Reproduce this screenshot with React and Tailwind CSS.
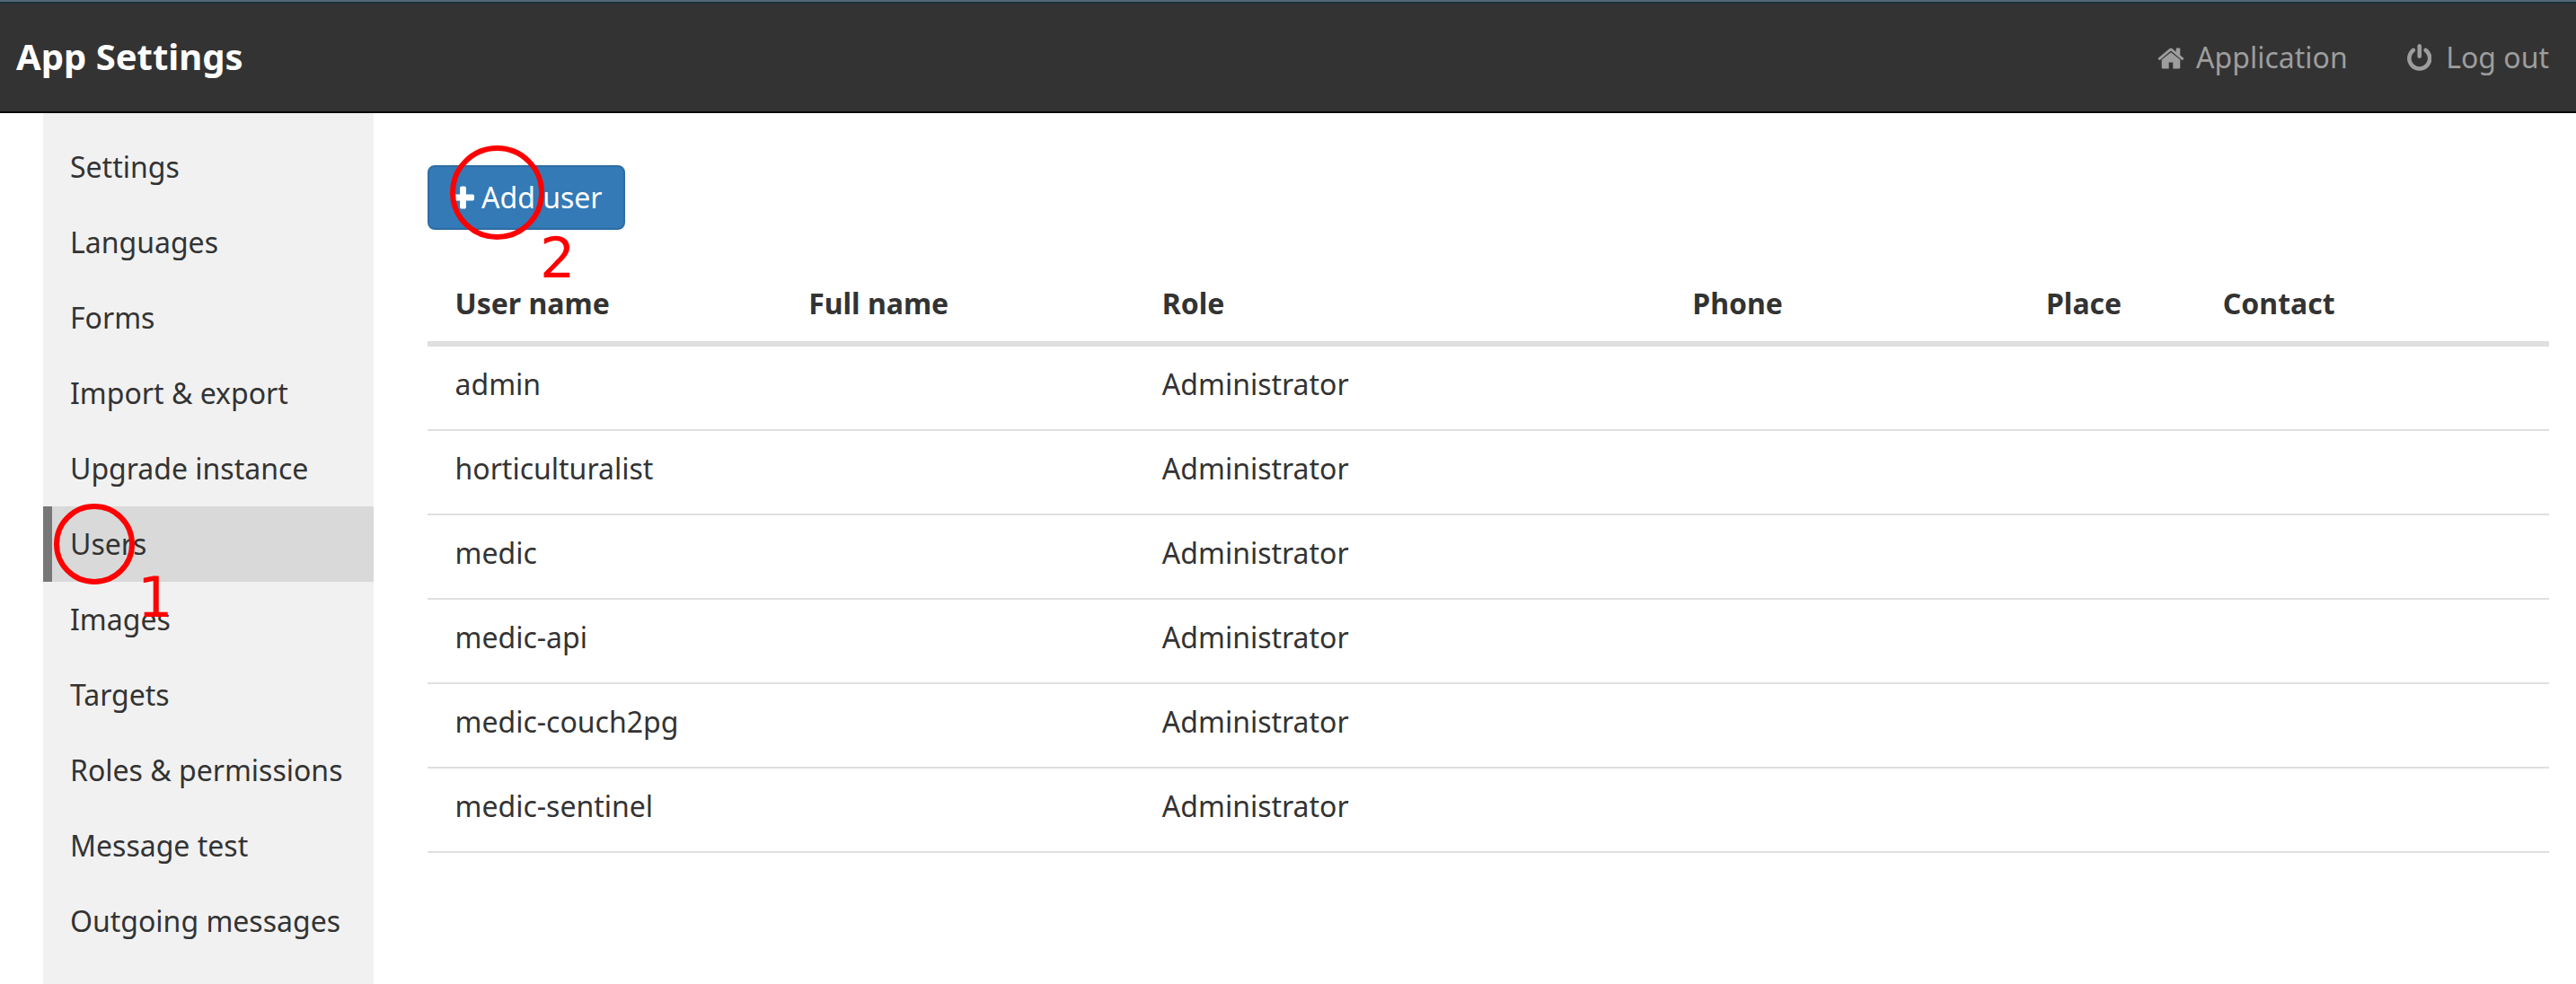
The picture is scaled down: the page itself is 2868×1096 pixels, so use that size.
const NAV = [
  'Settings', 'Languages', 'Forms', 'Import & export', 'Upgrade instance', 'Users',
  'Images', 'Targets', 'Roles & permissions', 'Message test', 'Outgoing messages',
];
const USERS = ['admin', 'horticulturalist', 'medic', 'medic-api', 'medic-couch2pg', 'medic-sentinel'];

const HomeIcon = () => (
  <svg className="mt-px h-[32px] w-[30px] shrink-0" viewBox="0 0 1664 1792" fill="currentColor">
    <path d="M1408 992v480q0 26-19 45t-45 19h-384v-384h-256v384h-384q-26 0-45-19t-19-45v-480q0-1 .5-3t.5-3l575-474 575 474q1 2 1 6zm223-69l-62 74q-8 9-21 11h-3q-13 0-21-7l-692-577-692 577q-12 8-24 7-13-2-21-11l-62-74q-8-10-7-23.500t11-21.500l719-599q32-26 76-26t76 26l244 204v-195q0-14 9-23t23-9h192q14 0 23 9t9 23v408l219 182q10 8 11 21.500t-7 23.500z" />
  </svg>
);

const PowerIcon = () => (
  <svg className="mt-px h-[32px] w-[27.500px] shrink-0" viewBox="0 0 1536 1792" fill="currentColor">
    <path d="M1536 896q0 156-61 298t-164 245-245 164-298 61-298-61-245-164-164-245-61-298q0-182 80.500-343t226.500-270q43-32 95.500-25t83.500 50q32 42 24.500 94.500t-49.500 84.500q-98 74-151.500 181t-53.500 228q0 104 40.500 198.500t109.500 163.500 163.500 109.500 198.500 40.500 198.500-40.500 163.500-109.500 109.500-163.500 40.500-198.500q0-121-53.500-228t-151.500-181q-42-32-49.500-84.500t24.500-94.500q31-43 84-50t95 25q146 109 226.500 270t80.500 343zm-640-768v640q0 52-38 90t-90 38-90-38-38-90v-640q0-52 38-90t90-38 90 38 38 90z" />
  </svg>
);

const PlusIcon = () => (
  <svg className="h-[32px] w-[25px] shrink-0" viewBox="0 0 1408 1792" fill="currentColor">
    <path d="M1408 800v192q0 40-28 68t-68 28h-416v416q0 40-28 68t-68 28h-192q-40 0-68-28t-28-68v-416h-416q-40 0-68-28t-28-68v-192q0-40 28-68t68-28h416v-416q0-40 28-68t68-28h192q40 0 68 28t28 68v416h416q40 0 68 28t28 68z" />
  </svg>
);

export default function App() {
  return (
    <div className="relative flex h-[1096px] w-[2868px] flex-col overflow-hidden bg-white font-['Noto_Sans',sans-serif] text-[32px] leading-[44px] text-[#333333]">
      <div className="h-[2px] shrink-0 bg-[#4f6673]" />
      <header className="flex h-[124px] shrink-0 items-center justify-between border-t-2 border-b-2 border-t-[#1b313b] border-b-[#090909] bg-[#333333] pl-[18px] pr-[30px]">
        <h1 className="mb-[3px] text-[40px] font-bold text-white">App Settings</h1>
        <nav className="flex gap-[66px] text-[#9d9d9d]">
          <a className="flex items-center gap-[13px]"><HomeIcon />Application</a>
          <a className="flex items-center gap-[16px]"><PowerIcon />Log out</a>
        </nav>
      </header>
      <div className="flex min-h-0 flex-1">
        <aside className="ml-12 w-[368px] shrink-0 bg-[#f1f1f1] pt-[18px]">
          <ul>
            {NAV.map((n) => (
              <li
                key={n}
                className={
                  n === 'Users'
                    ? 'flex h-[84px] items-center border-l-[10px] border-[#777777] bg-[#d9d9d9] pl-5'
                    : 'flex h-[84px] items-center border-l-[10px] border-transparent pl-5'
                }
              >
                {n}
              </li>
            ))}
          </ul>
        </aside>
        <main className="flex-1 pl-[60px] pr-[30px] pt-[58px]">
          <button className="flex h-[72px] w-[220px] items-center gap-[8px] rounded-lg border-2 border-[#2e6da4] bg-[#337ab7] pl-[25px] text-white">
            <PlusIcon />
            <span className="whitespace-nowrap">Add user</span>
          </button>
          <div className="grid h-[130px] grid-cols-12 items-end border-b-[6px] border-[#dfdfdf] pb-[20px] font-bold">
            <div className="col-span-2 pl-[30.500px]">User name</div>
            <div className="col-span-2 pl-[30.500px]">Full name</div>
            <div className="col-span-3 pl-[30.500px]">Role</div>
            <div className="col-span-2 pl-[30.500px]">Phone</div>
            <div className="pl-[30.500px]">Place</div>
            <div className="col-span-2 pl-[30.500px]">Contact</div>
          </div>
          {USERS.map((u) => (
            <div key={u} className="grid h-[94px] grid-cols-12 border-b-2 border-[#dfdfdf] pt-[20px]">
              <div className="col-span-4 pl-[30.500px]">{u}</div>
              <div className="col-span-3 pl-[30.500px]">Administrator</div>
            </div>
          ))}
        </main>
      </div>

      {/* Step markers lying over the interface */}
      <div className="absolute left-[60px] top-[561px] h-[90px] w-[90px] rounded-full border-[6px] border-[#ff0000]" />
      <div className="absolute left-[153px] top-[630px] font-['DejaVu_Sans',sans-serif] text-[62px] leading-[72px] text-[#ff0000]">1</div>
      <div className="absolute left-[501px] top-[162px] h-[105px] w-[105px] rounded-full border-[6px] border-[#ff0000]" />
      <div className="absolute left-[601px] top-[252px] font-['DejaVu_Sans',sans-serif] text-[62px] leading-[72px] text-[#ff0000]">2</div>
    </div>
  );
}
